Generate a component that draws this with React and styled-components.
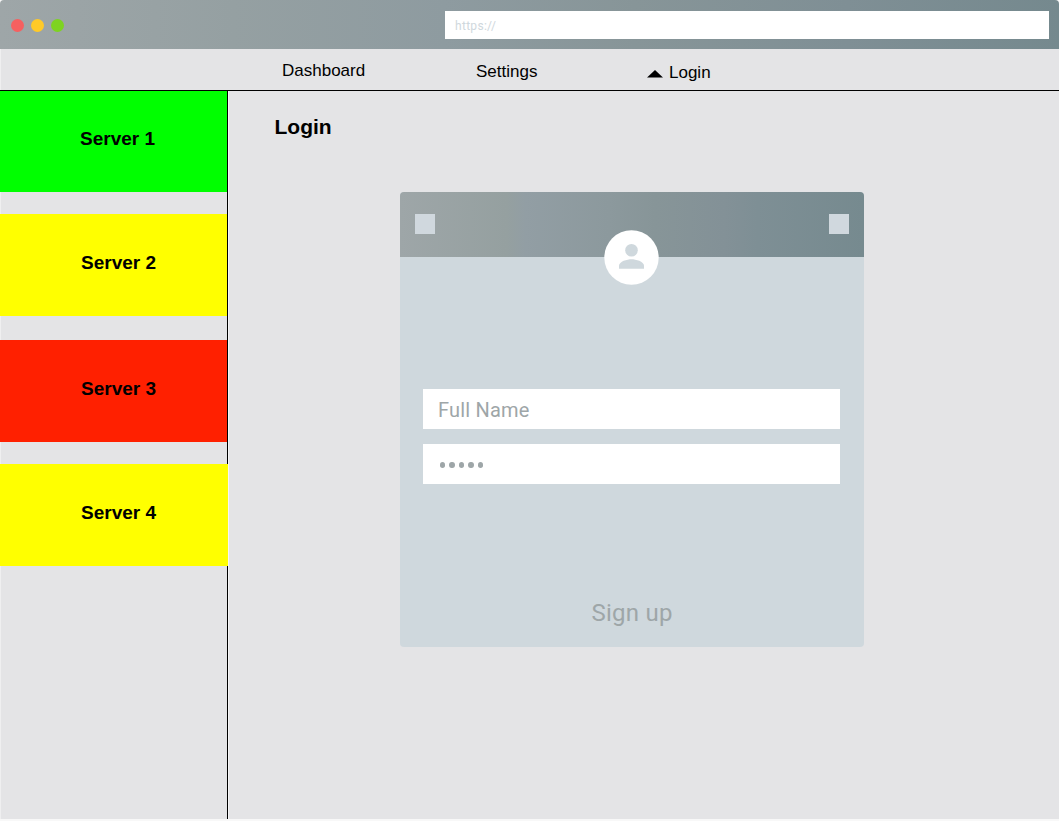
import React from "react";
import styled, { createGlobalStyle } from "styled-components";

const GlobalStyle = createGlobalStyle`
  *, *::before, *::after { box-sizing: border-box; }
  html, body { margin: 0; padding: 0; background: #f8f8f8; }
  body { font-family: "Liberation Sans", Arial, sans-serif; color: #000; overflow: hidden; }
`;

const headerGradient =
  "linear-gradient(90deg, #9ea6a8 0%, #95a0a0 23%, #929ea4 27%, #8c999d 45%, #879598 55%, #839197 70%, #7e8f95 77%, #768a8f 100%)";

const Window = styled.div`
  width: 1059px;
  height: 821px;
  display: flex;
  flex-direction: column;
  padding-bottom: 2px;
`;

const BrowserBar = styled.header`
  height: 49px;
  display: flex;
  align-items: center;
  justify-content: space-between;
  padding: 0 10px 0 11px;
  border-radius: 4px 4px 0 0;
  background: linear-gradient(90deg, #9ea6a8 0%, #95a0a2 22%, #8e9ba0 42%, #879598 60%, #7f8f95 80%, #75898e 100%);
`;

const WindowControls = styled.div`
  display: flex;
  gap: 7px;
  padding-top: 2px;
`;

const ControlDot = styled.span`
  width: 13px;
  height: 13px;
  border-radius: 50%;
  background: ${({ $color }) => $color};
`;

const AddressField = styled.div`
  width: 604px;
  height: 28px;
  padding: 1px 0 0 10px;
  margin-top: 1px;
  background: #fff;
  color: #cfd8dd;
  font-family: Roboto, sans-serif;
  font-size: 12px;
  letter-spacing: 0.3px;
  line-height: 28px;
`;

const Nav = styled.nav`
  height: 42px;
  display: flex;
  align-items: flex-start;
  padding-left: 282px;
  background: #e4e4e6;
  border-bottom: 1px solid #000;
  box-shadow: inset 1px 0 0 #efeff0;
`;

const NavItem = styled.a`
  width: ${({ $width }) => $width}px;
  padding-top: ${({ $drop }) => $drop}px;
  display: flex;
  align-items: center;
  gap: 6px;
  font-size: 17px;
  line-height: 20px;
`;

const Caret = styled.svg`
  width: 16px;
  height: 8px;
  margin-top: 2px;
`;

const Body = styled.div`
  flex: 1;
  display: flex;
  background: #e4e4e6;
  box-shadow: inset 1px 0 0 #efeff0;
`;

const Sidebar = styled.aside`
  width: 228px;
  border-right: 1px solid #000;
`;

const ServerTile = styled.div`
  width: ${({ $width = 227 }) => $width}px;
  height: ${({ $height = 102 }) => $height}px;
  margin-bottom: ${({ $gap }) => $gap}px;
  padding: ${({ $top = 38 }) => $top}px 0 0 ${({ $left = 81 }) => $left}px;
  background: ${({ $color }) => $color};
  font-size: 19px;
  font-weight: 700;
  line-height: 22px;
  white-space: nowrap;
`;

const Main = styled.main`
  flex: 1;
  padding: 24px 0 0 45px;
  border-left: 1px solid #f6f6f7;
`;

const Title = styled.h1`
  margin: 0;
  padding-left: 0.5px;
  font-size: 21px;
  font-weight: 700;
  line-height: 24px;
`;

const Card = styled.section`
  width: 464px;
  height: 455px;
  margin: 53px 0 0 126px;
  display: flex;
  flex-direction: column;
  align-items: center;
  border-radius: 4px;
  overflow: hidden;
  background: #cfd8dd;
`;

const CardHeader = styled.div`
  position: relative;
  width: 100%;
  height: 65px;
  display: flex;
  justify-content: space-between;
  padding: 22px 15px 0;
  background: ${headerGradient};
`;

const Square = styled.span`
  width: 20px;
  height: 20px;
  background: #d0d8de;
`;

const Avatar = styled.svg`
  position: absolute;
  left: 204px;
  top: 38px;
  width: 55px;
  height: 55px;
`;

const Fields = styled.div`
  margin: 132px 1px 0 0;
  display: flex;
  flex-direction: column;
  gap: 15px;
`;

const Field = styled.div`
  width: 417px;
  height: 40px;
  padding: 1px 15px 0;
  display: flex;
  align-items: center;
  background: #fff;
  color: #9ea6a8;
  font-family: Roboto, sans-serif;
  font-size: 20px;
  letter-spacing: 0.2px;
`;

const PasswordDots = styled.div`
  display: flex;
  gap: 4px;
  padding-left: 1.5px;
`;

const PasswordDot = styled.span`
  width: 5.5px;
  height: 6px;
  border-radius: 50%;
  background: #9ea6a8;
`;

const SignUp = styled.button`
  margin-top: 114px;
  padding: 0;
  border: 0;
  background: none;
  color: #9ea6a8;
  font-family: Roboto, sans-serif;
  font-size: 24px;
  letter-spacing: 0.25px;
  line-height: 30px;
`;

const servers = [
  { name: "Server 1", color: "#00ff00", gap: 22, height: 101, top: 37, left: 80 },
  { name: "Server 2", color: "#ffff00", gap: 24 },
  { name: "Server 3", color: "#ff2000", gap: 22 },
  { name: "Server 4", color: "#ffff00", gap: 0, width: 228 },
];

export default function App() {
  return (
    <>
      <GlobalStyle />
      <Window>
        <BrowserBar>
          <WindowControls>
            <ControlDot $color="#f66060" />
            <ControlDot $color="#ffca28" />
            <ControlDot $color="#7ed321" />
          </WindowControls>
          <AddressField>https://</AddressField>
        </BrowserBar>
        <Nav>
          <NavItem $width={194} $drop={12}>Dashboard</NavItem>
          <NavItem $width={171} $drop={13}>Settings</NavItem>
          <NavItem $width={90} $drop={14}>
            <Caret viewBox="0 0 16 8"><path d="M8 0 16 7.5H0Z" /></Caret>
            Login
          </NavItem>
        </Nav>
        <Body>
          <Sidebar>
            {servers.map((s) => (
              <ServerTile
                key={s.name}
                $color={s.color}
                $gap={s.gap}
                $height={s.height}
                $top={s.top}
                $left={s.left}
                $width={s.width}
              >
                {s.name}
              </ServerTile>
            ))}
          </Sidebar>
          <Main>
            <Title>Login</Title>
            <Card>
              <CardHeader>
                <Square />
                <Square />
                <Avatar viewBox="0 0 55 55">
                  <circle cx="27.5" cy="27.5" r="27.2" fill="#fff" />
                  <circle cx="27.5" cy="20.3" r="6.3" fill="#cfd8dd" />
                  <path d="M15 38.7v-3.1c0-4.2 8.3-6.4 12.5-6.4S40 31.4 40 35.6v3.1Z" fill="#cfd8dd" />
                </Avatar>
              </CardHeader>
              <Fields>
                <Field>Full Name</Field>
                <Field>
                  <PasswordDots>
                    {[0, 1, 2, 3, 4].map((i) => <PasswordDot key={i} />)}
                  </PasswordDots>
                </Field>
              </Fields>
              <SignUp>Sign up</SignUp>
            </Card>
          </Main>
        </Body>
      </Window>
    </>
  );
}
